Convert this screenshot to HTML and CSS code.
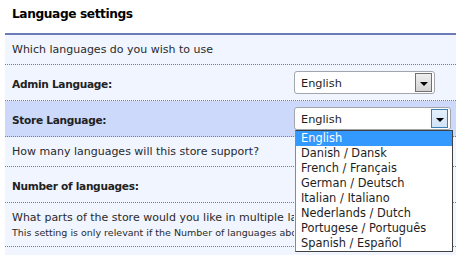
FILE: index.html
```html
<!DOCTYPE html>
<html>
<head>
    <title>Language settings</title>
    <link rel="stylesheet" href="styles.css">
</head>
<body>
    <div class="page">
        <h1 class="title">Language settings</h1>
        <div class="panel">
            <div class="row short">
                <div class="note">Which languages do you wish to use</div>
            </div>

            <div class="row field">
                <label>Admin Language:</label>
                <div class="control">
                    <div class="select admin"><span class="value">English</span><span class="arrow"></span></div>
                </div>
            </div>

            <div class="row field active">
                <label>Store Language:</label>
                <div class="control">
                    <div class="select store open"><span class="value">English</span><span class="arrow"></span>
                        <ul class="options">
                            <li class="selected">English</li>
                            <li>Danish / Dansk</li>
                            <li>French / Français</li>
                            <li>German / Deutsch</li>
                            <li>Italian / Italiano</li>
                            <li>Nederlands / Dutch</li>
                            <li>Portugese / Português</li>
                            <li>Spanish / Español</li>
                        </ul>
                    </div>
                </div>
            </div>

            <div class="row short">
                <div class="note">How many languages will this store support?</div>
            </div>

            <div class="row field">
                <label>Number of languages:</label>
                <div class="control"></div>
            </div>

            <div class="row tall">
                <div class="note clipped">
                    What parts of the store would you like in multiple languages?
                    <small>This setting is only relevant if the Number of languages above is more than one.</small>
                </div>
            </div>

            <div class="row short"></div>
        </div>
    </div>
</body>
</html>
```

FILE: styles.css
```css
* {
    margin: 0;
    padding: 0;
    box-sizing: border-box;
}

html, body {
    width: 100%;
    height: 100%;
    overflow: hidden;
}

body {
    background-color: #ffffff;
    font-family: "DejaVu Sans", Verdana, sans-serif;
    font-size: 11px;
    color: #2a2a2a;
}

.title {
    height: 33px;
    padding-left: 12px;
    font-size: 12.2px;
    letter-spacing: -0.4px;
    line-height: 28px;
    font-weight: bold;
    color: #000000;
}

.panel {
    margin-left: 5px;
    border-top: 2px solid #6b7bb6;
    background-color: #f0f5ff;
}

.row {
    display: grid;
    grid-template-columns: 289px 1fr;
    align-items: center;
    min-height: 36px;
    border-bottom: 1px dotted #6b7bb6;
}

.row.short {
    min-height: 30px;
}

.row.tall {
    min-height: 44px;
}

.row.active {
    background-color: #ccd9fb;
}

.row .note {
    grid-column: 1 / 3;
    padding-left: 7px;
    white-space: nowrap;
    overflow: hidden;
}

.row .note.clipped {
    grid-column: 1 / 2;
}

.row .note small {
    display: block;
    margin-top: 3px;
    font-size: 9.5px;
}

.row label {
    padding-left: 7px;
    padding-top: 3px;
    font-weight: bold;
    font-size: 10.6px;
    letter-spacing: -0.3px;
    color: #222222;
}

.control {
    display: flex;
}

.select {
    position: relative;
    display: flex;
    align-items: center;
    justify-content: space-between;
    height: 23px;
    padding: 1px 2px 1px 6px;
    background-color: #ffffff;
    border: 1px solid #a2a6ab;
    border-radius: 3px;
    font-size: 11.3px;
    color: #1e1e1e;
}

.select.admin {
    width: 141px;
}

.select.store {
    width: 157px;
}

.select .value {
    padding-top: 1px;
}

.arrow {
    display: flex;
    align-items: center;
    justify-content: center;
    width: 17px;
    height: 19px;
    background: linear-gradient(#eeeeee, #d4d4d4);
    border: 1px solid #707070;
}

.arrow::after {
    content: "";
    border-left: 4px solid transparent;
    border-right: 4px solid transparent;
    border-top: 4px solid #000000;
    margin-top: 2px;
}

.select.open .arrow {
    background: linear-gradient(#e6f1fc, #cfe3f8);
    border-color: #3c7fb1;
}

/* dropdown list lies over the rows below */
.options {
    position: absolute;
    top: 22px;
    left: 0;
    width: 158px;
    list-style: none;
    background-color: #ffffff;
    border: 1px solid #404040;
    border-left-color: #8a8a8a;
    font-size: 11.4px;
    color: #1e1e1e;
    z-index: 10;
}

.options li {
    height: 15px;
    line-height: 15px;
    padding-left: 5px;
    white-space: nowrap;
}

.options li.selected {
    background-color: #3399ff;
    color: #ffffff;
}
```
